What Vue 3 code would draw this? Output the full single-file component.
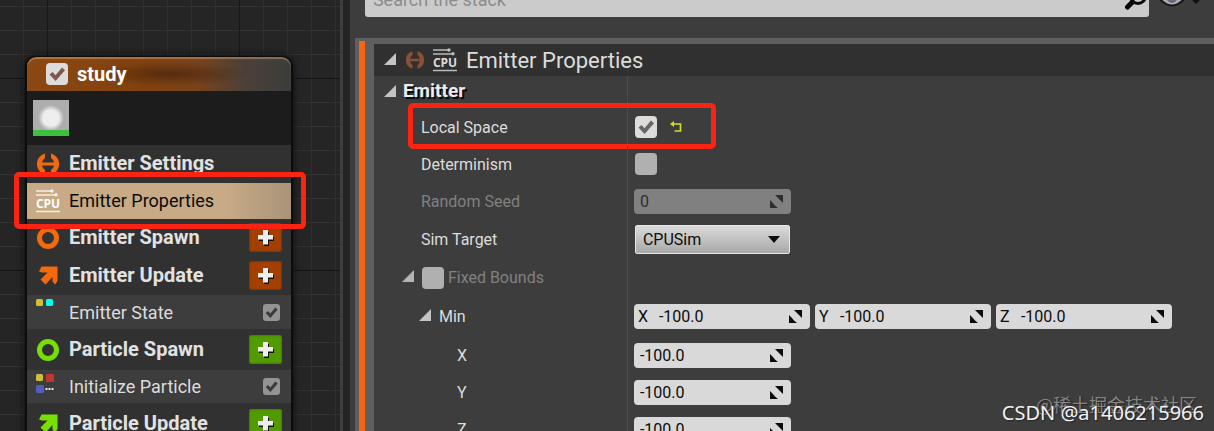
<script setup>
import { ref } from 'vue'

const stack = ref([
  { label: 'Emitter Settings', kind: 'group', icon: 'link', tone: 'orange', size: 'h38' },
  { label: 'Emitter Properties', kind: 'active', icon: 'cpu', size: 'h36' },
  { label: 'Emitter Spawn', kind: 'group', icon: 'ring', tone: 'orange', add: true, size: 'h37' },
  { label: 'Emitter Update', kind: 'group', icon: 'arrow', tone: 'orange', add: true, size: 'h39' },
  { label: 'Emitter State', kind: 'module', icon: 'dots2', enabled: true, size: 'h34' },
  { label: 'Particle Spawn', kind: 'group', icon: 'ring', tone: 'green', add: true, size: 'h41' },
  { label: 'Initialize Particle', kind: 'module', icon: 'dots4', enabled: true, size: 'h33' },
  { label: 'Particle Update', kind: 'group', icon: 'arrow', tone: 'green', add: true, size: 'h41' },
])
const emitterOn = ref(true)
const localSpace = ref(true)
const determinism = ref(false)
const fixedBounds = ref(false)
const seed = ref('0')
const simTarget = ref('CPUSim')
const min = ref([
  { axis: 'X', value: '-100.0', size: 'h38' },
  { axis: 'Y', value: '-100.0', size: 'h37' },
  { axis: 'Z', value: '-100.0', size: 'h37' },
])
</script>

<template>
  <svg class="defs" aria-hidden="true">
    <symbol id="tick" viewBox="0 0 22 22">
      <path d="M3.5 11.5 6.500 9l3 3.200L16 4.500l3 2.700L9.600 18Z" />
    </symbol>
    <symbol id="tri" viewBox="0 0 12 12"><path d="M12 0v12H0Z" /></symbol>
    <symbol id="link" viewBox="0 0 22 22">
      <path d="M8 .4A11 11 0 0 0 8 21.600V17A6.500 6.500 0 0 1 5 12.500H17A6.500 6.500 0 0 1 14 17V21.600A11 11 0 0 0 14 .4V5A6.500 6.500 0 0 1 17 9.500H5A6.500 6.500 0 0 1 8 5Z" />
    </symbol>
    <symbol id="cpu" viewBox="0 0 24 24">
      <path d="M0 2h16M0 6h19M0 22.500h24" fill="none" stroke="currentColor" stroke-width="1.300" opacity=".8" />
      <circle cx="16" cy="2" r="1.700" opacity=".8" /><circle cx="20" cy="5.800" r="1.700" opacity=".8" />
      <text x="12" y="18.500" text-anchor="middle" font-family="Open Sans, sans-serif" font-weight="700" font-size="12">CPU</text>
    </symbol>
    <symbol id="spin" viewBox="0 0 13 13">
      <path d="M5 0h8v8L10.500 5.500 8 3ZM0 5l2.500 2.500L5 10.500 8 13H0Z" />
    </symbol>
  </svg>

  <main class="app">
    <section class="graph" aria-label="Graph">
      <article class="node">
        <header class="node-head">
          <label class="check light">
            <input v-model="emitterOn" type="checkbox" aria-label="Enable study" />
            <svg v-if="emitterOn" class="tick brown"><use href="#tick" /></svg>
          </label>
          <h2>study</h2>
        </header>
        <div class="preview"><div class="thumb"></div></div>
        <ul class="stack">
          <li v-for="row in stack" :key="row.label" :class="['item', row.kind, row.tone, row.size]">
            <span class="slot">
              <svg v-if="row.icon === 'link'" class="i22"><use href="#link" /></svg>
              <svg v-else-if="row.icon === 'cpu'" class="i24"><use href="#cpu" /></svg>
              <svg v-else-if="row.icon === 'ring'" class="i22" viewBox="0 0 22 22">
                <circle cx="11" cy="11" r="8.500" fill="none" stroke="currentColor" stroke-width="5" />
              </svg>
              <svg v-else-if="row.icon === 'arrow'" class="i22" viewBox="0 0 22 22">
                <path d="M4.500 1.500H20.500V16L18 19.500 15.500 16.500 15.500 12 8.500 19.500 3.500 14.500 10.500 7.500H5L2 6.500Z" />
              </svg>
              <svg v-else class="i24" viewBox="0 0 24 24">
                <rect x="0" y="0" width="7" height="7" rx="1.500" fill="#cdbf37" />
                <rect v-if="row.icon === 'dots2'" x="10" y="0" width="7" height="7" rx="1.500" fill="#0fe" />
                <g v-else>
                  <rect x="10" y="0" width="8" height="8" rx="1.500" fill="#c43632" />
                  <rect x="0" y="11" width="8" height="8" rx="1.500" fill="#555dbd" />
                  <path d="M9.500 14h2v2h-2zM12.500 14h2v2h-2zM15.500 14h2v2h-2z" fill="#e8e8e8" />
                </g>
              </svg>
            </span>
            <span class="name">{{ row.label }}</span>
            <button v-if="row.add" type="button" class="add" :aria-label="'Add to ' + row.label">
              <svg viewBox="0 0 18 18">
                <path d="M7 3h5v5h5v4h-5v5H7v-5H2V8h5Z" fill="#111" />
                <path d="M6 1h5v5h5v4.500h-5V15.500H6V10.500H1V6h5Z" fill="#eee" />
              </svg>
            </button>
            <label v-if="row.kind === 'module'" class="check small">
              <input v-model="row.enabled" type="checkbox" :aria-label="'Enable ' + row.label" />
              <svg v-if="row.enabled" class="tick"><use href="#tick" /></svg>
            </label>
            <span v-if="row.kind === 'active'" class="mark mark-item"></span>
          </li>
        </ul>
      </article>
    </section>

    <div class="splitter"></div>

    <section class="details" aria-label="Details">
      <div class="toolbar">
        <div class="search">
          <input type="text" placeholder="Search the stack" aria-label="Search the stack" />
          <svg class="lens" viewBox="0 0 24 24">
            <circle cx="14" cy="9" r="7.500" fill="none" stroke="#080808" stroke-width="3" />
            <path d="m8.500 15-5 5" stroke="#080808" stroke-width="5" stroke-linecap="round" />
          </svg>
        </div>
        <button type="button" class="view" aria-label="View options">
          <svg viewBox="0 0 44 24">
            <path d="M1 12Q14-3 27 12 14 27 1 12Z" fill="#aaaab2" stroke="#151515" stroke-width="2" />
            <circle cx="14" cy="12" r="5" fill="#666978" />
            <path d="M34 14h8l-4 4Z" fill="#111" />
          </svg>
        </button>
      </div>

      <div class="card">
        <div class="accent"></div>
        <div class="props">
          <header class="title">
            <svg class="tri"><use href="#tri" /></svg>
            <svg class="i18 dim"><use href="#link" /></svg>
            <svg class="i24"><use href="#cpu" /></svg>
            <h1>Emitter Properties</h1>
          </header>

          <div class="row h32">
            <div class="key lv0"><svg class="tri"><use href="#tri" /></svg><h3>Emitter</h3></div>
            <div class="val"></div>
          </div>
          <div class="row h38">
            <div class="key lv1"><label for="local">Local Space</label></div>
            <div class="val inset">
              <span class="check light">
                <input id="local" v-model="localSpace" type="checkbox" />
                <svg v-if="localSpace" class="tick"><use href="#tick" /></svg>
              </span>
              <button type="button" class="reset" aria-label="Reset to default">
                <svg viewBox="0 0 12 12">
                  <path d="M2 3h8.500v7H4.500" fill="none" stroke="#d3e01e" stroke-width="1.700" />
                  <path d="M0 3 4 0v6Z" fill="#d3e01e" />
                </svg>
              </button>
            </div>
            <span class="mark mark-row"></span>
          </div>
          <div class="row h36">
            <div class="key lv1"><label for="det">Determinism</label></div>
            <div class="val inset">
              <span class="check"><input id="det" v-model="determinism" type="checkbox" /></span>
            </div>
          </div>
          <div class="row h38">
            <div class="key lv1 off"><label for="seed">Random Seed</label></div>
            <div class="val">
              <div class="num disabled">
                <input id="seed" v-model="seed" type="text" disabled />
                <svg class="spin"><use href="#spin" /></svg>
              </div>
            </div>
          </div>
          <div class="row h38">
            <div class="key lv1"><label for="sim">Sim Target</label></div>
            <div class="val">
              <div class="combo">
                <select id="sim" v-model="simTarget">
                  <option>CPUSim</option>
                  <option>GPUCompute Sim</option>
                </select>
                <svg viewBox="0 0 12 7"><path d="M0 0h12L6 7Z" /></svg>
              </div>
            </div>
          </div>
          <div class="row h39">
            <div class="key lv2 off">
              <svg class="tri"><use href="#tri" /></svg>
              <span class="check"><input id="fixed" v-model="fixedBounds" type="checkbox" /></span>
              <label for="fixed">Fixed Bounds</label>
            </div>
            <div class="val"></div>
          </div>
          <div class="row h39">
            <div class="key lv3"><svg class="tri"><use href="#tri" /></svg><span>Min</span></div>
            <div class="val vec">
              <div v-for="m in min" :key="m.axis" class="num wide">
                <label :for="'v' + m.axis">{{ m.axis }}</label>
                <input :id="'v' + m.axis" v-model="m.value" type="text" />
                <svg class="spin"><use href="#spin" /></svg>
              </div>
            </div>
          </div>
          <div v-for="m in min" :key="m.axis" :class="['row', m.size]">
            <div class="key lv4"><label :for="'s' + m.axis">{{ m.axis }}</label></div>
            <div class="val">
              <div class="num">
                <input :id="'s' + m.axis" v-model="m.value" type="text" />
                <svg class="spin"><use href="#spin" /></svg>
              </div>
            </div>
          </div>
        </div>
      </div>
    </section>

    <p class="wm wm-cn">@稀土掘金技术社区</p>
    <p class="wm wm-en">CSDN @a1406215966</p>
  </main>
</template>

<style>
body { background: #3d3d3d; }
</style>

<style scoped>
.defs { position: absolute; width: 0; height: 0; }
.app {
  position: relative;
  display: flex;
  height: 100vh;
  overflow: hidden;
  font-family: Roboto, "Noto Sans", sans-serif;
  font-size: 16px;
  color: #dcdcdc;
}
.app *, .app { box-sizing: border-box; }
h1, h2, h3, p, ul { margin: 0; padding: 0; }
button { border: 0; padding: 0; background: none; }
svg { display: block; flex: none; fill: currentColor; }
input, select { font: inherit; color: inherit; }

.graph {
  flex: none;
  width: 28%;
  padding: 56px 0 0 25px;
  background-color: #252525;
  background-image:
    linear-gradient(#141414 1px, transparent 1px),
    linear-gradient(90deg, #181818 1px, transparent 1px),
    linear-gradient(#323232 1px, transparent 1px),
    linear-gradient(90deg, #2e2e2e 1px, transparent 1px);
  background-size: 192px 192px, 192px 192px, 24px 24px, 24px 24px;
  background-position: 0 78px, 47px 0, 0 6px, 23px 0;
}
.node {
  width: 268px;
  border: 2px solid #0c0c0c;
  border-top-width: 1px;
  border-radius: 11px 11px 0 0;
  background: #1b1c1b;
  box-shadow: 0 0 6px 1px #111;
}
.node-head {
  display: flex;
  align-items: center;
  gap: 9px;
  height: 34px;
  padding-left: 19px;
  border-radius: 9px 9px 0 0;
  background:
    radial-gradient(ellipse 80px 12px at 54% 50%, rgba(40, 16, 4, .45), transparent),
    linear-gradient(90deg, #8c4812 0%, #80410f 45%, #78431c 65%, #4c4038 82%, #3b3d3b 100%);
  box-shadow: inset 0 2px 1px rgba(255, 200, 160, .35);
}
.node-head h2 { padding-bottom: 1px; font-size: 20px; font-weight: 700; color: #fff; }
.preview { height: 54px; padding: 9px 6px; }
.thumb {
  width: 36px;
  height: 36px;
  border-bottom: 6px solid #3fbf3f;
  background: radial-gradient(circle at 50% 60%, #eee 0 8px, #d2d2d2 10px, #adadad 13px);
}
.stack { list-style: none; }
.item {
  position: relative;
  display: flex;
  align-items: center;
  padding-right: 9px;
  background: #313131;
}
.slot { width: 42px; padding-left: 10px; }
.name { flex: 1; padding-bottom: 2px; white-space: nowrap; }
.group .name { font-size: 20px; font-weight: 700; color: #e2e2e2; }
.orange { color: #f26a0c; }
.green { color: #78e000; }
.module { background: #3d3d3d; padding-right: 11px; }
.module .name, .active .name { font-size: 18px; }
.module .name { padding-bottom: 0; }
.module .slot { align-self: flex-start; padding: 4px 0 0 9px; }
.active { background: linear-gradient(90deg, #c8aa86 75%, #a99478); }
.active .slot { padding-left: 9px; color: #fff; }
.active .name { color: #0a0a0a; }
.add {
  display: grid;
  place-items: center;
  width: 33px;
  height: 29px;
  border-radius: 2px;
  background: #a34000;
  box-shadow: inset 0 0 2px #401a00;
}
.green .add { background: #529a00; box-shadow: inset 0 0 2px #234500; }
.add svg { width: 18px; height: 18px; }

.h32 { height: 32px; }
.h33 { height: 33px; }
.h34 { height: 34px; }
.h36 { height: 36px; }
.h37 { height: 37px; }
.h38 { height: 38px; }
.h39 { height: 39px; }
.h41 { height: 41px; }
.i18 { width: 18px; height: 18px; }
.i22 { width: 22px; height: 22px; }
.i24 { width: 24px; height: 24px; }

.mark {
  position: absolute;
  border: 5px solid #fb2412;
  border-radius: 5px;
  pointer-events: none;
}
.mark-item { inset: -11px -15px -10px -13px; z-index: 1; }
.mark-row { top: -5px; bottom: -3px; left: 34px; width: 308px; }

.check { display: grid; flex: none; width: 22px; height: 22px; color: #666; }
.check input {
  grid-area: 1 / 1;
  appearance: none;
  width: 100%;
  height: 100%;
  margin: 0;
  border-radius: 4px;
  background: #b0b0b0;
}
.check.light input { background: #dedcda; }
.check .tick { grid-area: 1 / 1; width: 100%; height: 100%; pointer-events: none; }
.check .brown { color: #7b5a50; }
.check.small { width: 17px; height: 17px; color: #3a3a3a; }
.check.small input { border-radius: 3px; background: #939393; }

.splitter { flex: none; width: 10px; border-left: 3px solid #3d3d3d; background: #242424; }
.details { flex: 1; min-width: 0; background: #3d3d3d; }
.toolbar {
  display: flex;
  align-items: flex-end;
  gap: 9px;
  height: 17px;
  padding: 0 12px 0 15px;
}
.search { position: relative; flex: 1; }
.search input {
  display: block;
  width: 100%;
  height: 36px;
  padding: 0 8px;
  border: 0;
  border-radius: 3px;
  background: #cbcbcb;
  color: #222;
  font-size: 18px;
}
.search input::placeholder { color: #8b8b8b; opacity: 1; }
.lens { position: absolute; right: 1px; bottom: 6px; width: 24px; height: 24px; }
.view { width: 44px; height: 24px; margin-bottom: 7px; }
.view svg { width: 44px; height: 24px; }

.card {
  display: flex;
  margin: 21px 0 0 5px;
  padding: 3px 0 0 4px;
  background: #5f5f5f;
}
.accent { flex: none; width: 6px; background: #f4660f; }
.props { flex: 1; min-width: 0; margin: 3px 0 0 9px; background: #3d3d3d; }
.title {
  display: flex;
  align-items: center;
  height: 32px;
  padding-left: 10px;
  background: #303030;
}
.title .i18 { margin: 0 9px 0 10px; }
.title h1 { margin-left: 9px; font-size: 22px; font-weight: 400; }
.dim { color: #8b5137; }
.tri { width: 12px; height: 12px; margin-bottom: 3px; color: #c4c4c4; }
.row { position: relative; display: flex; }
.key {
  display: flex;
  flex: none;
  align-items: center;
  width: 253px;
  white-space: nowrap;
}
.key h3 { margin-left: 7px; font-size: 19px; color: #ececec; text-shadow: 2px 2px 1px #080808; }
.lv0 { padding: 0 0 3px 10px; }
.lv0 .tri { margin-bottom: 0; }
.lv1 { padding-left: 47px; }
.lv2 { padding-left: 28px; gap: 8px; }
.lv2 label { margin-left: -4px; }
.lv3 { padding-left: 45px; gap: 8px; }
.lv4 { padding-left: 83px; }
.off { color: #818181; }
.off .tri { color: #b4b4b4; }
.val {
  display: flex;
  flex: 1;
  align-items: center;
  padding-left: 6px;
  border-left: 1px solid #4b4b4b;
}
.inset { padding-left: 7px; gap: 13px; }
.reset, .reset svg { width: 12px; height: 12px; }
.vec { gap: 5px; }
.num {
  display: flex;
  align-items: center;
  width: 157px;
  height: 25px;
  padding: 0 8px 0 6px;
  border-radius: 4px;
  background: #d9d9d9;
  color: #0c0c0c;
}
.num.wide { width: 176px; padding-left: 4px; }
.num label { width: 21px; }
.num input { flex: 1; min-width: 0; padding: 0; border: 0; background: none; }
.num.disabled { background: #808080; color: #2e2e2e; }
.spin { width: 13px; height: 13px; }
.combo { display: grid; align-items: center; margin-left: 1px; color: #0c0c0c; }
.combo select {
  grid-area: 1 / 1;
  appearance: none;
  width: 155px;
  height: 29px;
  padding: 0 7px;
  border: 1px solid #e6e6e6;
  border-radius: 2px;
  background: linear-gradient(#dadada, #a9a9a9);
}
.combo svg { grid-area: 1 / 1; justify-self: end; width: 12px; height: 7px; margin-right: 10px; pointer-events: none; }

.wm { position: absolute; white-space: nowrap; text-shadow: 1px 1px 1px #222; }
.wm-cn { right: 17px; bottom: 14px; font: 18px/26px "Noto Sans CJK SC", sans-serif; color: #858585; }
.wm-en { right: 10px; bottom: 5px; font: 20px/26px "Noto Sans", sans-serif; color: #f2f2f2; }
</style>
